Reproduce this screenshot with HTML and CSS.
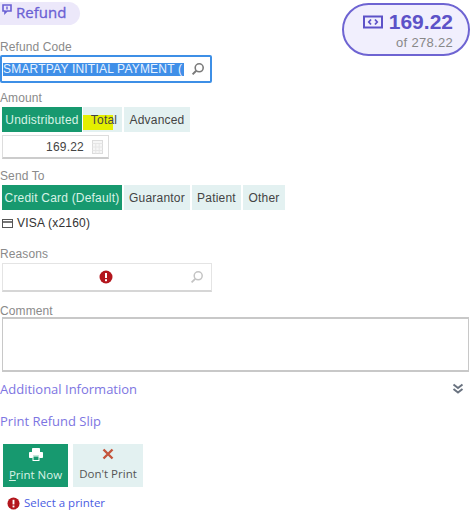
FILE: index.html
```html
<!DOCTYPE html>
<html lang="en">
  <head>
    <meta charset="UTF-8" />
    <meta name="viewport" content="width=device-width, initial-scale=1.0" />
    <title>Refund</title>
    <link rel="stylesheet" href="styles.css">
  </head>
  <body>
    <div class="page">
      <div class="top">
        <div class="top-left">
          <h2 class="title">
            <svg class="title-icon" width="10" height="11" viewBox="0 0 10 11"><path d="M1 1h8v6H5L3 9V7H1z" fill="none" stroke="#6a60d4" stroke-width="1.6"/><path d="M5 2.5v3" stroke="#6a60d4" stroke-width="1.4"/></svg>
            Refund
          </h2>
          <label class="field-label first">Refund Code</label>
          <div class="code-input">
            <span class="selected">SMARTPAY INITIAL PAYMENT (</span>
            <svg class="search" width="14" height="14" viewBox="0 0 14 14"><circle cx="8.2" cy="5.8" r="4" fill="none" stroke="#7a7a7a" stroke-width="1.6"/><path d="M5.2 8.8 1.6 12.4" stroke="#7a7a7a" stroke-width="2"/></svg>
          </div>
        </div>
        <div class="balance">
          <div class="balance-main">
            <svg width="20" height="14" viewBox="0 0 20 14"><rect x="1" y="1.5" width="18" height="11" fill="none" stroke="#5d52c8" stroke-width="2"/><path d="M8 4.5 5.8 7 8 9.5M12 4.5 14.2 7 12 9.5" fill="none" stroke="#5d52c8" stroke-width="1.8"/></svg>
            169.22
          </div>
          <div class="balance-of">of 278.22</div>
        </div>
      </div>

      <label class="field-label">Amount</label>
      <div class="btn-row">
        <button class="opt on w-undist">Undistributed</button>
        <button class="opt total">Total</button>
        <button class="opt w-adv">Advanced</button>
      </div>
      <div class="amount-input">
        <span>169.22</span>
        <svg width="11" height="14" viewBox="0 0 11 14"><rect x="0.5" y="0.5" width="10" height="13" fill="#f6f6f6" stroke="#dcdcdc"/><path d="M0.5 3.5h10M0.5 7h10M0.5 10.5h10M3.8 3.5v10M7.2 3.5v10" stroke="#e6e6e6"/></svg>
      </div>

      <label class="field-label send-label">Send To</label>
      <div class="btn-row">
        <button class="opt on w-credit">Credit Card (Default)</button>
        <button class="opt w-guar">Guarantor</button>
        <button class="opt w-patient">Patient</button>
        <button class="opt w-other">Other</button>
      </div>
      <div class="card">
        <svg width="11" height="9" viewBox="0 0 11 9"><rect x="0.5" y="0.5" width="10" height="8" fill="none" stroke="#555"/><path d="M0.5 3h10" stroke="#555" stroke-width="1.6"/></svg>
        VISA (x2160)
      </div>

      <label class="field-label reasons-label">Reasons</label>
      <div class="reasons-input">
        <svg class="alert" width="14" height="14" viewBox="0 0 14 14"><circle cx="7" cy="7" r="6.5" fill="#b3161d"/><rect x="6" y="3" width="2" height="5" fill="#fff"/><rect x="6" y="9.2" width="2" height="2" fill="#fff"/></svg>
        <svg class="search" width="14" height="14" viewBox="0 0 14 14"><circle cx="8.2" cy="5.8" r="4" fill="none" stroke="#c4c4c4" stroke-width="1.5"/><path d="M5.2 8.8 1.6 12.4" stroke="#c4c4c4" stroke-width="1.8"/></svg>
      </div>

      <label class="field-label comment-label">Comment</label>
      <div class="comment"></div>

      <div class="section-row">
        <span class="section">Additional Information</span>
        <svg width="12" height="12" viewBox="0 0 12 12"><path d="M1.5 1.5 6 5l4.5-3.5M1.5 6 6 9.5 10.5 6" fill="none" stroke="#6a7380" stroke-width="2"/></svg>
      </div>
      <div class="section slip">Print Refund Slip</div>

      <div class="print-row">
        <button class="print-btn now">
          <svg width="14" height="13" viewBox="0 0 14 13"><path d="M3.5 4V0.5h7V4M0.5 4.5h13v5h-3V7h-7v2.500h-3z" fill="#fff" stroke="#fff"/><rect x="4" y="8" width="6" height="4.500" fill="none" stroke="#fff"/></svg>
          <span><u>P</u>rint Now</span>
        </button>
        <button class="print-btn">
          <svg width="12" height="12" viewBox="0 0 12 12"><path d="M1.500 1.500 10.500 10.500M10.500 1.500 1.500 10.500" stroke="#c4553c" stroke-width="2.400"/></svg>
          <span>Don't Print</span>
        </button>
      </div>
      <div class="printer-msg">
        <svg width="13" height="13" viewBox="0 0 14 14"><circle cx="7" cy="7" r="6.500" fill="#b3161d"/><rect x="6" y="3" width="2" height="5" fill="#fff"/><rect x="6" y="9.200" width="2" height="2" fill="#fff"/></svg>
        <a>Select a printer</a>
      </div>
    </div>
  </body>
</html>
```

FILE: styles.css
```css
body {
  font-family: "Liberation Sans", Arial, sans-serif;
  background-color: #fff;
  margin: 0;
  font-size: 12px;
  color: #444;
}
.page {
  width: 472px;
  height: 520px;
  overflow: hidden;
  box-sizing: border-box;
  padding: 2px 2px 0 0;
}
.top {
  display: flex;
  justify-content: space-between;
  align-items: flex-start;
}
.top-left {
  width: 212px;
}
.title {
  display: flex;
  align-items: center;
  gap: 4px;
  width: 80px;
  height: 23px;
  box-sizing: border-box;
  margin: 0;
  padding: 0 0 4px 2px;
  background-color: #ece8fa;
  border-radius: 0 12px 12px 0;
  font-size: 15px;
  font-weight: normal;
  font-family: "Open Sans", sans-serif;
  color: #6a60d4;
  -webkit-text-stroke: 0.3px #6a60d4;
}
.title-icon {
  margin-top: -5px;
}
.field-label {
  display: block;
  margin-top: 8px;
  line-height: 14px;
  color: #8a8a8a;
  letter-spacing: 0.1px;
}
.first {
  margin-top: 15px;
}
.code-input {
  display: flex;
  align-items: center;
  justify-content: space-between;
  height: 28px;
  box-sizing: border-box;
  margin-top: 1px;
  padding: 0 5px 0 1px;
  border: 2px solid #3d8fe6;
  border-radius: 2px;
  overflow: hidden;
}
.selected {
  width: 181px;
  height: 13px;
  line-height: 13px;
  letter-spacing: 0.2px;
  overflow: hidden;
  white-space: nowrap;
  background-color: #3f8fe8;
  color: #e8f2ff;
}
.balance {
  width: 128px;
  height: 53px;
  box-sizing: border-box;
  margin-top: 1px;
  padding-top: 5px;
  padding-right: 15px;
  background-color: #f1effd;
  border: 2px solid #6e64d2;
  border-radius: 27px;
  text-align: right;
}
.balance-main {
  display: flex;
  justify-content: flex-end;
  align-items: center;
  gap: 6px;
  font-size: 21px;
  line-height: 23px;
  font-weight: bold;
  color: #5d52c8;
}
.balance-of {
  margin-top: 2px;
  font-size: 13px;
  line-height: 15px;
  letter-spacing: 0.3px;
  color: #888;
}
.btn-row {
  display: flex;
  gap: 2px;
  margin-top: 2px;
  margin-left: 2px;
  height: 25px;
}
.opt {
  padding: 0;
  border: none;
  background-color: #e3f1f1;
  color: #444;
  font-family: inherit;
  font-size: 12px;
  letter-spacing: 0.2px;
}
.opt.on {
  background-color: #17996f;
  color: #d8f3e6;
}
.w-undist { width: 80px; }
.w-adv { width: 66px; }
.w-credit { width: 120px; }
.w-guar { width: 66px; }
.w-patient { width: 49px; }
.w-other { width: 42px; }
.btn-row .total {
  width: 39px;
  margin-left: -1px;
  padding-left: 3px;
  background: linear-gradient(#e4ef00, #e4ef00) no-repeat 0 8px / 30px 15px, #e3f1f1;
}
.amount-input {
  display: flex;
  align-items: center;
  justify-content: flex-end;
  gap: 8px;
  width: 107px;
  height: 24px;
  box-sizing: border-box;
  margin-top: 3px;
  margin-left: 2px;
  padding-right: 5px;
  border: 1px solid #ddd;
  border-bottom: 2px solid #ccc;
  letter-spacing: 0.2px;
}
.send-label {
  margin-top: 10px;
}
.card {
  display: flex;
  align-items: center;
  gap: 4px;
  margin-top: 6px;
  margin-left: 2px;
  line-height: 14px;
  letter-spacing: 0.2px;
  color: #333;
}
.reasons-label {
  margin-top: 17px;
}
.reasons-input {
  position: relative;
  display: flex;
  align-items: center;
  justify-content: flex-end;
  width: 210px;
  height: 29px;
  box-sizing: border-box;
  margin-top: 2px;
  margin-left: 2px;
  padding-right: 7px;
  border: 1px solid #e4e4e4;
  border-bottom: 2px solid #d6d6d6;
}
/* sits on top of the empty input */
.alert {
  position: absolute;
  left: 96px;
  top: 6px;
}
.comment-label {
  margin-top: 12px;
}
.comment {
  width: 467px;
  height: 55px;
  box-sizing: border-box;
  margin-top: -1px;
  margin-left: 2px;
  border: 1px solid #c8c8c8;
  border-top-width: 2px;
  border-bottom-width: 2px;
}
.section-row {
  display: flex;
  justify-content: space-between;
  align-items: center;
  margin-top: 9px;
  padding-right: 6px;
}
.section {
  display: block;
  font-family: "Open Sans", sans-serif;
  font-size: 13px;
  line-height: 16px;
  color: #7d75e2;
}
.slip {
  margin-top: 16px;
}
.print-row {
  display: flex;
  gap: 5px;
  margin-top: 15px;
  margin-left: 3px;
}
.print-btn {
  display: flex;
  flex-direction: column;
  align-items: center;
  justify-content: center;
  gap: 6px;
  width: 70px;
  height: 43px;
  padding: 0 0 2px;
  border: none;
  background-color: #e3f1f1;
  color: #555;
  font-family: "Open Sans", sans-serif;
  font-size: 11.5px;
}
.print-btn.now {
  width: 65px;
  background-color: #17996f;
  color: #d8f3e6;
}
.printer-msg {
  display: flex;
  align-items: center;
  gap: 4px;
  margin-top: 9px;
  margin-left: 7px;
  line-height: 14px;
}
.printer-msg a {
  color: #4a5ce2;
  font-family: "Open Sans", sans-serif;
  font-size: 11.500px;
}
```
